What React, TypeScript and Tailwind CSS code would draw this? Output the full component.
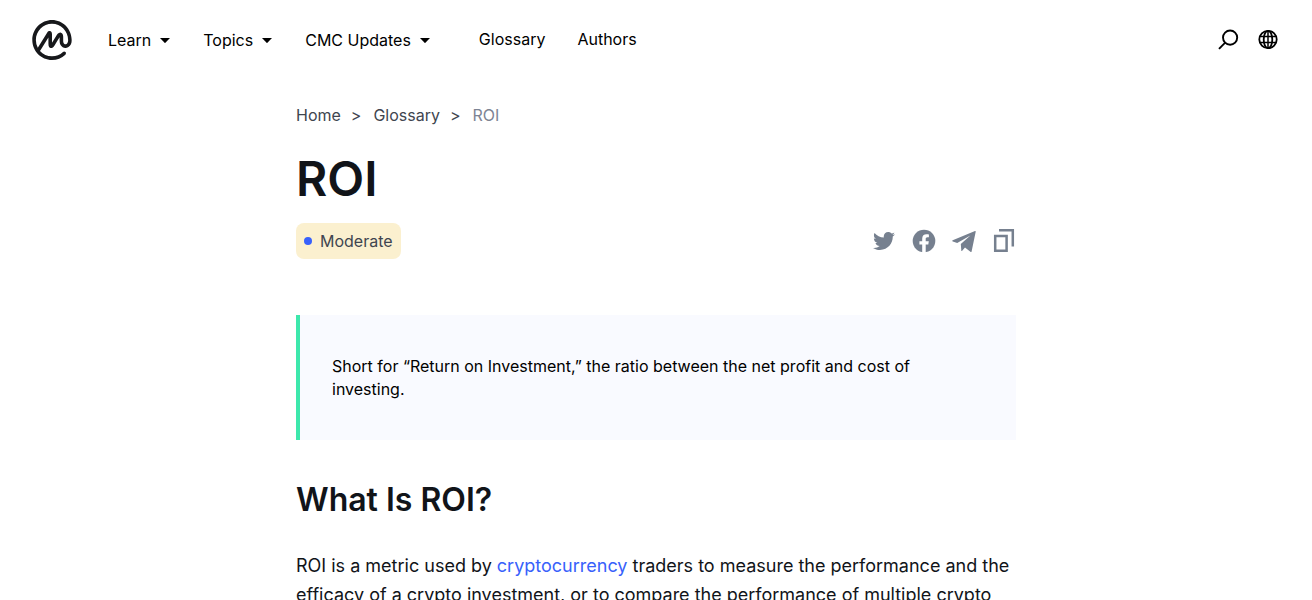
import { FaTwitter } from 'react-icons/fa'

const menus = ['Learn', 'Topics', 'CMC Updates']

function Logo() {
  return (
    <svg viewBox="0 0 24 24" className="size-10" fill="#17181b" aria-hidden="true">
      <path d="M20.738 14.341c-.419.265-.912.298-1.286.087-.476-.27-.737-.898-.737-1.774v-2.618c0-1.264-.5-2.164-1.336-2.407-1.416-.413-2.482 1.32-2.882 1.972l-2.498 4.05v-4.95c-.028-1.14-.398-1.821-1.1-2.027-.466-.135-1.161-.081-1.837.953l-5.597 8.987A9.875 9.875 0 0 1 2.326 12c0-5.414 4.339-9.818 9.672-9.818 5.332 0 9.67 4.404 9.67 9.818.004.018.002.034.003.053.05 1.049-.29 1.883-.933 2.29zm3.08-2.34l-.001-.055C23.788 5.353 18.497 0 12 0 5.48 0 .177 5.383.177 12c0 6.616 5.303 12 11.82 12 2.991 0 5.846-1.137 8.037-3.2.435-.41.46-1.1.057-1.541a1.064 1.064 0 0 0-1.519-.059 9.56 9.56 0 0 1-6.574 2.618c-2.856 0-5.425-1.263-7.197-3.268l5.048-8.105v3.737c0 1.794.696 2.374 1.28 2.544.584.17 1.476.054 2.413-1.468.998-1.614 2.025-3.297 3.023-4.88v2.276c0 1.678.672 3.02 1.843 3.68 1.056.597 2.384.543 3.465-.14 1.312-.828 2.018-2.354 1.944-4.193z" />
    </svg>
  )
}

function Caret() {
  return (
    <svg viewBox="0 0 12 12" className="size-3" fill="currentColor" aria-hidden="true">
      <path d="M1 4h10L6.4 8.7a.6.6 0 0 1-.8 0z" />
    </svg>
  )
}

function SearchIcon() {
  return (
    <svg viewBox="0 0 24 24" className="size-6" fill="none" stroke="currentColor" strokeWidth="1.9" aria-hidden="true">
      <circle cx="14.1" cy="9.6" r="7.1" />
      <path d="M9.2 14.6L3 20.8" />
    </svg>
  )
}

function GlobeIcon() {
  return (
    <svg viewBox="0 0 24 24" className="size-6" fill="none" stroke="currentColor" strokeWidth="1.8" aria-hidden="true">
      <circle cx="12" cy="11.5" r="8.7" />
      <ellipse cx="12" cy="11.5" rx="4.3" ry="8.7" />
      <path d="M12 2.8v17.4" strokeWidth="1.5" />
      <path d="M4 8.5h16M4 14.5h16" strokeWidth="1.6" />
    </svg>
  )
}

function FacebookIcon() {
  return (
    <svg viewBox="0 0 24 24" className="size-6" aria-hidden="true">
      <circle cx="12" cy="12" r="11.3" fill="currentColor" />
      <path
        fill="#fff"
        d="M10.2 24v-8.6H7.4v-3.2h2.8V9.7c0-2.9 1.7-4.4 4.3-4.4 1.2 0 2.4.2 2.4.2v2.7h-1.4c-1.3 0-1.8.8-1.8 1.7v2.3h3.1l-.5 3.2h-2.6V24z"
      />
    </svg>
  )
}

function TelegramIcon() {
  return (
    <svg viewBox="0 0 24 24" className="size-6" fill="currentColor" aria-hidden="true">
      <path d="M.7 11.3L23 2.1c.5-.2.8.1.7.6l-4.1 19.7c-.1.7-.7.8-1.2.4L13 18.4l-2.8 3.4c-.5.5-.9.3-.9-.3l-.5-6.6L18.4 6.6 5.2 13.9.8 12.4c-.7-.2-.7-.8-.1-1.1z" />
    </svg>
  )
}

function CopyIcon() {
  return (
    <svg viewBox="0 0 24 24" className="size-6" fill="none" stroke="currentColor" strokeWidth="2.5" aria-hidden="true">
      <path d="M3.2 6.9h11.4v14.8H3.2z" />
      <path d="M7 1.2h13.8v16.3" />
    </svg>
  )
}

export default function App() {
  return (
    <div className="bg-white font-['Inter',sans-serif] text-base text-black">
      <header className="flex h-20 items-center justify-between px-8">
        <div className="flex items-center gap-9">
          <a href="#" aria-label="CoinMarketCap">
            <Logo />
          </a>
          <nav className="flex items-center gap-12">
            <div className="flex gap-8">
              {menus.map(m => (
                <button key={m} type="button" className="flex items-center gap-2">
                  {m}
                  <Caret />
                </button>
              ))}
            </div>
            <div className="flex gap-8 pb-0.5">
              <a href="#">Glossary</a>
              <a href="#">Authors</a>
            </div>
          </nav>
        </div>
        <div className="flex gap-4">
          <button type="button" aria-label="Search"><SearchIcon /></button>
          <button type="button" aria-label="Language"><GlobeIcon /></button>
        </div>
      </header>

      <main className="mx-auto max-w-[720px] pt-[23px]">
        <nav aria-label="Breadcrumb" className="flex text-[#40454f]">
          <a href="#">Home</a>
          <span className="mr-3 ml-2.5">&gt;</span>
          <a href="#">Glossary</a>
          <span className="mr-3 ml-2.5">&gt;</span>
          <span className="text-[#7d8494]">ROI</span>
        </nav>

        <h1 className="mt-5 text-5xl/[64px] font-semibold text-[#111419]">ROI</h1>

        <div className="mt-3 flex items-center justify-between">
          <span className="flex h-9 items-center gap-2 rounded-lg bg-[#fbf0cf] px-2 text-[#40454f]">
            <span className="size-2 rounded-full bg-[#3861fb]" />
            Moderate
          </span>
          <div className="flex items-center gap-4 text-[#76808f]">
            <a href="#" aria-label="Share on Twitter" className="flex size-6 items-center justify-center">
              <FaTwitter className="size-[22px]" />
            </a>
            <a href="#" aria-label="Share on Facebook"><FacebookIcon /></a>
            <a href="#" aria-label="Share on Telegram"><TelegramIcon /></a>
            <button type="button" aria-label="Copy link"><CopyIcon /></button>
          </div>
        </div>

        <blockquote className="mt-14 border-l-4 border-[#3de8ac] bg-[#f9faff] px-8 pt-10 pb-[39px]">
          <p className="text-base/[23px]">
            Short for “Return on Investment,” the ratio between the net profit and cost of investing.
          </p>
        </blockquote>

        <h2 className="mt-10 text-[32px]/[40px] font-semibold text-[#111419]">What Is ROI?</h2>

        <p className="mt-[31px] text-lg/[29px] text-[#111419]">
          ROI is a metric used by{' '}
          <a href="#" className="text-[#3861fb]">cryptocurrency</a>{' '}
          traders to measure the performance and the efficacy of a crypto investment, or to compare the
          performance of multiple crypto
        </p>
      </main>
    </div>
  )
}
